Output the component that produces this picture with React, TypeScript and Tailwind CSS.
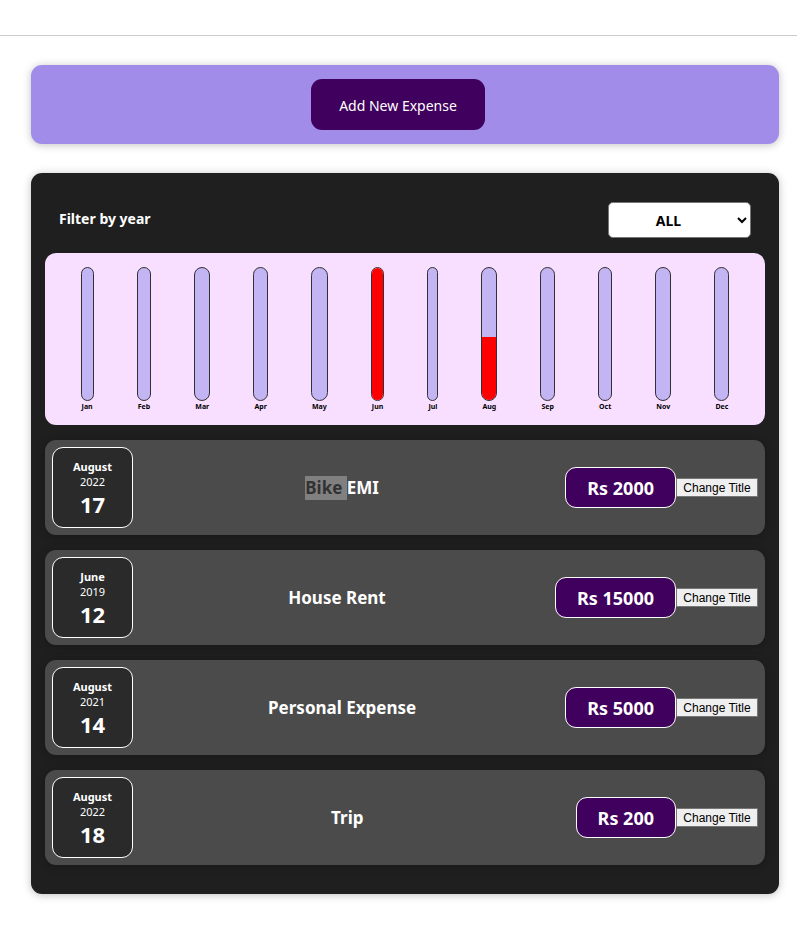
import { useState } from "react";

type Expense = {
  id: string;
  month: string;
  year: number;
  day: number;
  title: string;
  marked?: string;
  amount: number;
};

const expenses: Expense[] = [
  { id: "e1", month: "August", year: 2022, day: 17, title: "EMI", marked: "Bike ", amount: 2000 },
  { id: "e2", month: "June", year: 2019, day: 12, title: "House Rent", amount: 15000 },
  { id: "e3", month: "August", year: 2021, day: 14, title: "Personal Expense", amount: 5000 },
  { id: "e4", month: "August", year: 2022, day: 18, title: "Trip", amount: 200 },
];

const months = [
  { label: "Jan", fill: 0 },
  { label: "Feb", fill: 0 },
  { label: "Mar", fill: 0 },
  { label: "Apr", fill: 0 },
  { label: "May", fill: 0 },
  { label: "Jun", fill: 100 },
  { label: "Jul", fill: 0 },
  { label: "Aug", fill: 48 },
  { label: "Sep", fill: 0 },
  { label: "Oct", fill: 0 },
  { label: "Nov", fill: 0 },
  { label: "Dec", fill: 0 },
];

const cardShadow = "shadow-[0_1px_8px_rgba(0,0,0,0.25)]";

function ChartBar({ label, fill }: { label: string; fill: number }) {
  return (
    <div className="flex h-full flex-col items-center">
      <div className="flex w-full flex-1 flex-col justify-end overflow-hidden rounded-[11px] border border-[#313131] bg-[#c3b4f3]">
        <div className="bg-[#ff0000]" style={{ height: `${fill}%` }} />
      </div>
      <div className="h-[10px] px-px text-center text-[7px] leading-3 font-bold text-black">{label}</div>
    </div>
  );
}

function ExpenseItem({ expense }: { expense: Expense }) {
  return (
    <li className="flex items-center rounded-[11px] bg-[#4b4b4b] p-[7px] shadow-[0_1px_8px_rgba(0,0,0,0.25)]">
      <div className="flex size-[81px] shrink-0 flex-col items-center justify-center rounded-[11px] border border-white bg-[#2a2a2a] pt-[2px] text-white">
        <div className="text-[11px] leading-[15px] font-bold">{expense.month}</div>
        <div className="text-[11px] leading-[15px]">{expense.year}</div>
        <div className="text-[22px] leading-[30px] font-bold">{expense.day}</div>
      </div>
      <h2 className="mr-[14px] flex-1 text-center text-[17px] leading-6 font-bold text-white">
        {expense.marked && (
          <mark className="inline-block bg-[#808080] whitespace-pre text-[#333333]">{expense.marked}</mark>
        )}
        {expense.title}
      </h2>
      <div className="rounded-[11px] border border-white bg-[#40005d] px-[21px] pt-2 pb-[6px] text-[18px] leading-[25px] font-bold text-white">
        Rs {expense.amount}
      </div>
      <button
        type="button"
        className="h-[19px] w-[82px] border border-[#767676] bg-[#efefef] font-['Liberation_Sans',Arial,sans-serif] text-[12px] leading-[14px] text-black"
      >
        Change Title
      </button>
    </li>
  );
}

export default function App() {
  const [year, setYear] = useState("ALL");

  return (
    <div className="min-h-screen bg-white pb-8 font-['Noto_Sans',sans-serif]">
      <header className="h-9 border-b border-[#cccccc]" />
      <main className="mt-[29px] mr-[18px] ml-[31px] flex flex-col gap-[29px]">
        <section className={`flex justify-center rounded-[11px] bg-[#a18cea] p-[14px] ${cardShadow}`}>
          <button
            type="button"
            className="mr-[14px] h-[51px] w-[174px] rounded-[11px] bg-[#40005d] pt-[2px] text-[14px] text-white"
          >
            Add New Expense
          </button>
        </section>

        <section className={`rounded-[11px] bg-[#1f1f1f] px-[14px] py-[29px] ${cardShadow}`}>
          <div className="mb-[15px] flex items-center justify-between px-[14px]">
            <label htmlFor="year" className="pb-[2px] text-[14px] leading-5 font-bold text-white">
              Filter by year
            </label>
            <select
              id="year"
              value={year}
              onChange={(event) => setYear(event.target.value)}
              className="h-9 w-[143px] rounded-[5px] border border-[#767676] bg-white pr-[10px] text-center text-[14px] font-bold text-black"
            >
              <option>ALL</option>
              <option>2022</option>
              <option>2021</option>
              <option>2020</option>
              <option>2019</option>
            </select>
          </div>

          <div className="mb-[15px] flex h-[172px] justify-around rounded-[11px] bg-[#f8dfff] p-[14px]">
            {months.map((month) => (
              <ChartBar key={month.label} label={month.label} fill={month.fill} />
            ))}
          </div>

          <ul className="flex flex-col gap-[15px]">
            {expenses.map((expense) => (
              <ExpenseItem key={expense.id} expense={expense} />
            ))}
          </ul>
        </section>
      </main>
    </div>
  );
}
